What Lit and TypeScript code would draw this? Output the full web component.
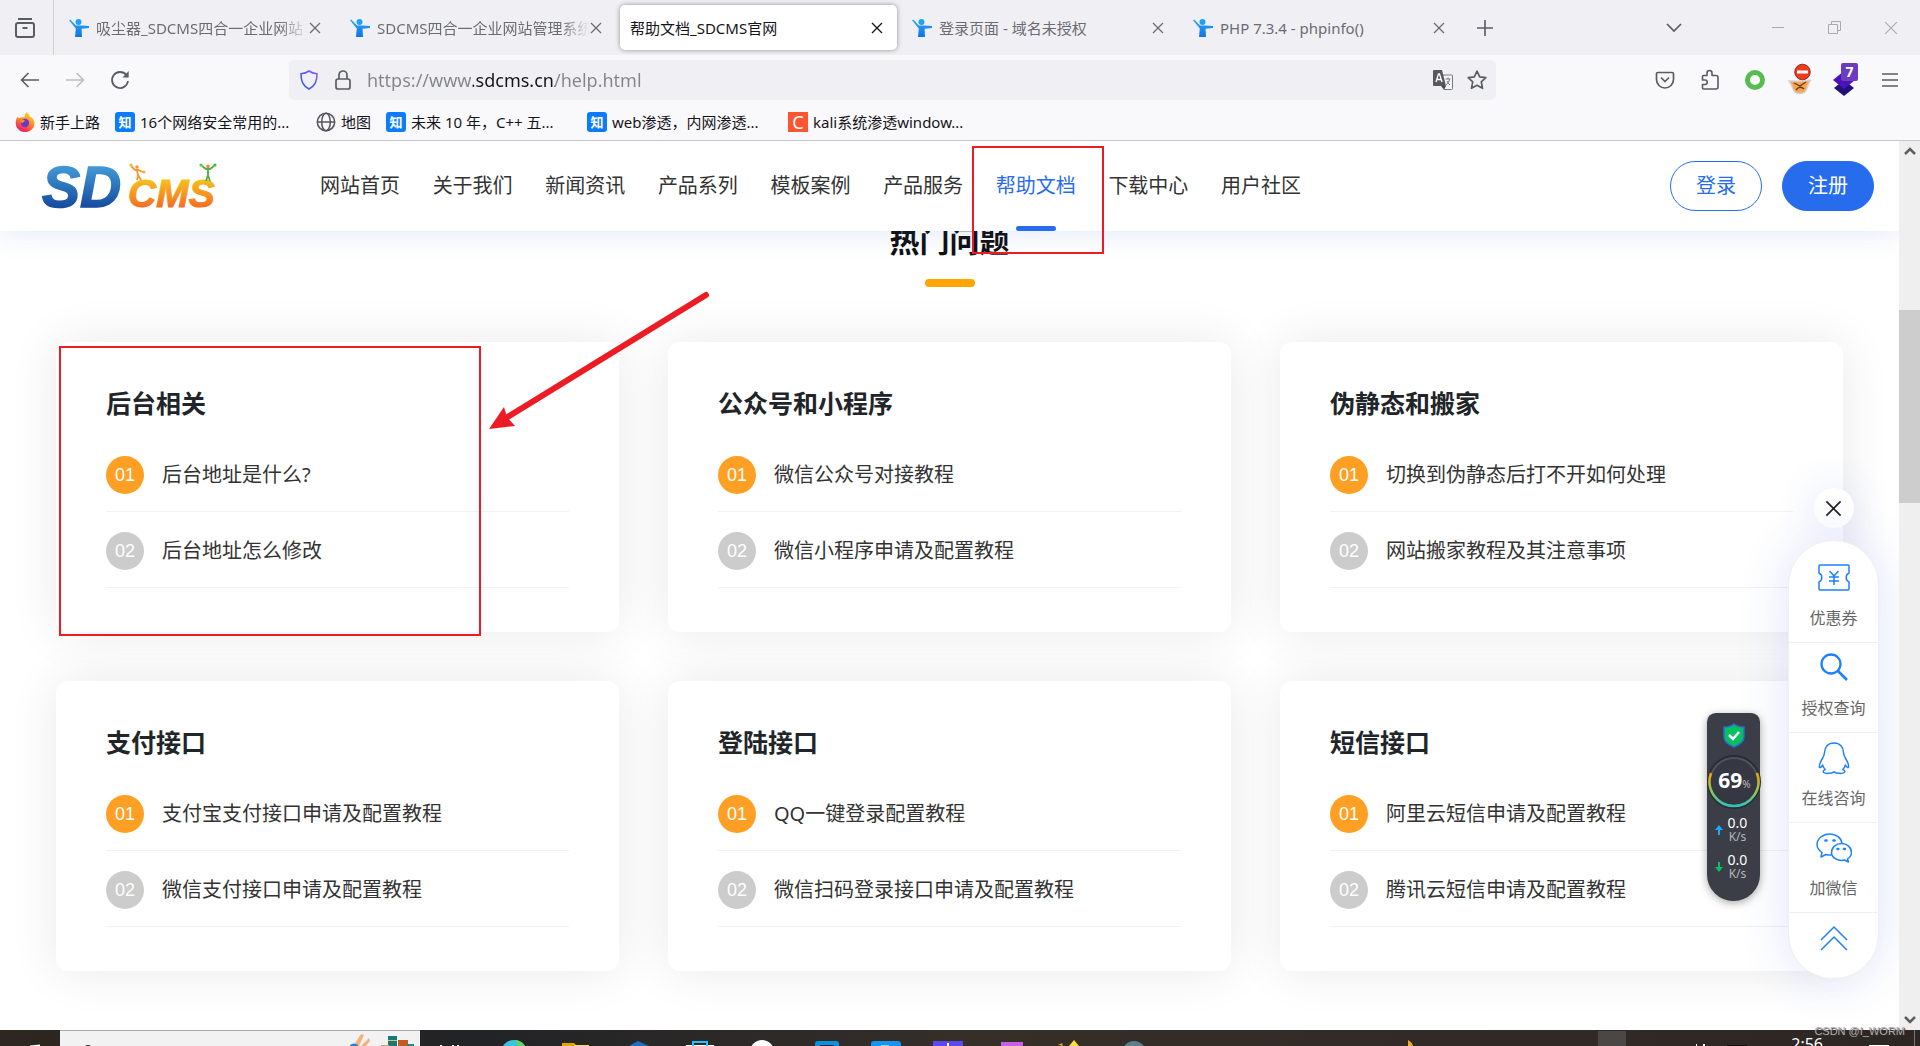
import { LitElement, html, css, svg, nothing } from "lit";
import { customElement, property } from "lit/decorators.js";
import { classMap } from "lit/directives/class-map.js";

const person = html`<svg width="20" height="18" viewBox="0 0 20 18" aria-hidden="true">
  <defs><linearGradient id="pg" x1="0" y1="0" x2="0" y2="1"><stop offset="0" stop-color="#2ba7f5"/><stop offset="1" stop-color="#1273e6"/></linearGradient></defs>
  <circle cx="9.500" cy="3" r="3" fill="#22a0f2"/>
  <path d="M0 1.200 1.200.4 7 6.400h5.400L20 7v2l-7.400.8L13 18H6l.8-8.400z" fill="url(#pg)"/>
</svg>`;

const cross = (size: number, weight = 1.3) => html`<svg width=${size} height=${size} viewBox="0 0 12 12" fill="none" stroke="currentColor" stroke-width=${weight} aria-hidden="true"><path d="M1 1 11 11M11 1 1 11"/></svg>`;

const firefox = html`<svg width="20" height="20" viewBox="0 0 20 20" aria-hidden="true">
  <defs><linearGradient id="ff" x1=".8" y1="0" x2=".3" y2="1"><stop offset="0" stop-color="#ffe03a"/><stop offset=".45" stop-color="#ff9020"/><stop offset=".8" stop-color="#fb3c4e"/><stop offset="1" stop-color="#e8127c"/></linearGradient></defs>
  <path d="M11.500 0c2 1.500 3 3 3.500 4.500 3 1.500 4.500 4 4.500 7A9.300 8.500 0 0 1 .7 11.500C.7 8.500 1.500 6 3 4.500c0 1 .4 1.600 1 2C5.500 5 8 5 9.500 5.500 9.500 3 10.300 1.200 11.500 0z" fill="url(#ff)"/>
  <circle cx="10" cy="11" r="4.200" fill="#6a38d0"/><path d="M5 8c2-1 4-.4 5.500 1-1.600.2-2 .8-2.500 2C6 11 5 9.500 5 8z" fill="#ff8a1c"/>
</svg>`;

const globe = html`<svg width="20" height="20" viewBox="0 0 20 20" fill="none" stroke="#55545f" stroke-width="1.5" aria-hidden="true"><circle cx="10" cy="10" r="8.700"/><ellipse cx="10" cy="10" rx="4.300" ry="8.700"/><path d="M1.300 10h17.400"/></svg>`;

interface Tab { title: string; active?: boolean }
interface Mark { kind: "firefox" | "globe" | "zhi" | "c"; label: string }
interface Group { title: string; items: string[] }

const TABS: Tab[] = [
  { title: "吸尘器_SDCMS四合一企业网站" },
  { title: "SDCMS四合一企业网站管理系统" },
  { title: "帮助文档_SDCMS官网", active: true },
  { title: "登录页面 - 域名未授权" },
  { title: "PHP 7.3.4 - phpinfo()" },
];

const MARKS: Mark[] = [
  { kind: "firefox", label: "新手上路" },
  { kind: "zhi", label: "16个网络安全常用的..." },
  { kind: "globe", label: "地图" },
  { kind: "zhi", label: "未来 10 年，C++ 五..." },
  { kind: "zhi", label: "web渗透，内网渗透..." },
  { kind: "c", label: "kali系统渗透window..." },
];

const GROUPS: Group[] = [
  { title: "后台相关", items: ["后台地址是什么?", "后台地址怎么修改"] },
  { title: "公众号和小程序", items: ["微信公众号对接教程", "微信小程序申请及配置教程"] },
  { title: "伪静态和搬家", items: ["切换到伪静态后打不开如何处理", "网站搬家教程及其注意事项"] },
  { title: "支付接口", items: ["支付宝支付接口申请及配置教程", "微信支付接口申请及配置教程"] },
  { title: "登陆接口", items: ["QQ一键登录配置教程", "微信扫码登录接口申请及配置教程"] },
  { title: "短信接口", items: ["阿里云短信申请及配置教程", "腾讯云短信申请及配置教程"] },
];

const NAV = ["网站首页", "关于我们", "新闻资讯", "产品系列", "模板案例", "产品服务", "帮助文档", "下载中心", "用户社区"];

const reset = css`
  *, *::before, *::after { box-sizing: border-box; }
  button { font: inherit; color: inherit; background: none; border: 0; padding: 0; margin: 0; display: flex; align-items: center; justify-content: center; }
  a { color: inherit; text-decoration: none; }
  svg { display: block; flex: none; }
  ul, h2, h3 { margin: 0; padding: 0; list-style: none; }
`;

@customElement("browser-chrome")
class BrowserChrome extends LitElement {
  static styles = [reset, css`
    :host { display: block; background: #f9f9fb; border-bottom: 1px solid #c8c8cb; color: #5b5b66; font: 15px/20px "Noto Sans", "Noto Sans CJK SC", sans-serif; }
    .tabs { display: flex; align-items: center; height: 55px; background: #f0f0f4; }
    .recent { flex: none; width: 54px; height: 55px; border-right: 1px solid #cfcfd6; padding-right: 3px; }
    .strip { display: flex; gap: 4px; margin-left: 4px; min-width: 0; }
    .tab { display: flex; align-items: center; width: 277px; height: 45px; padding: 0 14px 0 11px; border-radius: 5px; color: #6b6b73; }
    .tab.active { background: #fff; color: #15141a; box-shadow: 0 0 5px rgba(0, 0, 0, .4); padding-left: 10px; }
    .title { display: block; flex: 1; min-width: 0; margin-left: 7px; overflow: hidden; white-space: nowrap; text-align: left; line-height: 22px; }
    .title.long { -webkit-mask-image: linear-gradient(to left, transparent, #000 30px); mask-image: linear-gradient(to left, transparent, #000 30px); }
    .active .title { margin-left: 0; }
    .close { width: 12px; height: 20px; }
    .plus { margin-left: 18px; }
    .window { display: flex; align-items: center; margin-left: auto; padding-right: 22px; color: #a9a9b0; }
    .window button { width: 57px; height: 40px; }
    .window .all { width: 40px; margin-right: 55px; color: #5b5b66; }
    .window .quit { width: 14px; margin-left: 21px; }
    .nav { display: flex; align-items: center; height: 50px; padding: 0 20px 0 20px; }
    .moves { display: flex; gap: 25px; flex: none; width: 269px; }
    .moves button, .tools button { width: 20px; height: 24px; }
    .off { color: #bdbdc4; }
    .address { display: flex; align-items: center; flex: 0 1 1207px; min-width: 0; height: 40px; padding: 0 9px 0 10px; border-radius: 5px; background: #f0f0f4; gap: 14px; }
    .address input { flex: 1; min-width: 0; height: 28px; border: 0; padding: 0; outline: 0; font: 18px/28px "Noto Sans", sans-serif; color: transparent;
      background: linear-gradient(to right, #84848c 0 106px, #15141a 106px 188px, #84848c 188px); -webkit-background-clip: text; background-clip: text; }
    .tools { display: flex; gap: 25px; margin-left: auto; }
    .marks { display: flex; align-items: center; height: 35px; padding: 0 15px 1px; color: #15141a; }
    .marks a { display: flex; align-items: center; gap: 5px; margin-right: 15px; white-space: nowrap; }
    .label.cut { min-width: 161px; }
    .zhi, .c { display: flex; align-items: center; justify-content: center; width: 20px; height: 20px; border-radius: 3px; background: #0b7bff; color: #fff; font: bold 13px/20px "Noto Sans CJK SC", sans-serif; }
    .c { border-radius: 0; background: #fc5531; font: 18px/20px "Noto Sans", sans-serif; }
  `];

  private mark(m: Mark) {
    const icon = m.kind === "firefox" ? firefox : m.kind === "globe" ? globe
      : html`<span class=${m.kind}>${m.kind === "zhi" ? "知" : "C"}</span>`;
    return html`<a href="#">${icon}<span class=${classMap({ label: true, cut: m.label.endsWith("...") })}>${m.label}</span></a>`;
  }

  render() {
    return html`
      <div class="tabs">
        <button class="recent" aria-label="Recent"><svg width="22" height="22" viewBox="0 0 22 22" fill="none" stroke="currentColor" stroke-width="2"><path d="M4 2h14"/><rect x="2" y="6" width="18" height="14" rx="2"/><path d="M8.500 11h5"/></svg></button>
        <div class="strip">
          ${TABS.map((t, i) => html`<div class=${classMap({ tab: true, active: !!t.active })}>
            ${t.active ? nothing : person}
            <button class=${classMap({ title: true, long: i < 2 })}>${t.title}</button>
            <button class="close" aria-label="Close tab">${cross(12)}</button>
          </div>`)}
        </div>
        <button class="plus" aria-label="New tab"><svg width="16" height="16" viewBox="0 0 16 16" stroke="currentColor" stroke-width="1.600"><path d="M8 0v16M0 8h16"/></svg></button>
        <div class="window">
          <button class="all" aria-label="List tabs"><svg width="16" height="10" viewBox="0 0 16 10" fill="none" stroke="currentColor" stroke-width="1.700"><path d="M1 1l7 7 7-7"/></svg></button>
          <button aria-label="Minimize"><svg width="12" height="2" viewBox="0 0 12 2"><path d="M0 0h12v1H0z" fill="currentColor"/></svg></button>
          <button aria-label="Restore"><svg width="13" height="13" viewBox="0 0 13 13" fill="none" stroke="currentColor"><path d="M.5 3.500h9v9h-9zM3.500 3.500v-3h9v9h-3"/></svg></button>
          <button class="quit" aria-label="Close">${cross(14, 1)}</button>
        </div>
      </div>
      <div class="nav">
        <div class="moves">
          <button aria-label="Back"><svg width="20" height="16" viewBox="0 0 20 16" fill="none" stroke="currentColor" stroke-width="1.600"><path d="M19 8H2M8.500 1l-7 7 7 7"/></svg></button>
          <button class="off" aria-label="Forward"><svg width="20" height="16" viewBox="0 0 20 16" fill="none" stroke="currentColor" stroke-width="1.600"><path d="M1 8h17M11.500 1l7 7-7 7"/></svg></button>
          <button aria-label="Reload"><svg width="20" height="20" viewBox="0 0 20 20" fill="none" stroke="currentColor" stroke-width="1.800"><path d="M16.300 5A8 8 0 1 0 18 11"/><path d="M12.500 7.500h6.200V1z" fill="currentColor" stroke="none"/></svg></button>
        </div>
        <div class="address">
          <svg width="20" height="20" viewBox="0 0 20 20" fill="none" stroke-width="1.600"><defs><linearGradient id="sh" x1="0" y1="1" x2="1" y2="0"><stop offset="0" stop-color="#2b5bdc"/><stop offset="1" stop-color="#9059ff"/></linearGradient></defs><path d="M10 1c2.500 1.800 5 2.500 8 2.800 0 8-2 12-8 15.200C4 15.800 2 11.800 2 3.800 5 3.500 7.500 2.800 10 1z" stroke="url(#sh)"/></svg>
          <svg width="20" height="20" viewBox="0 0 20 20" fill="none" stroke="currentColor" stroke-width="1.700"><rect x="3" y="9" width="14" height="10" rx="2"/><path d="M6 9V5a4 4 0 0 1 8 0v4"/></svg>
          <input aria-label="Address" value="https://www.sdcms.cn/help.html">
          <button aria-label="Translate"><svg width="20" height="20" viewBox="0 0 20 20"><path d="M8 5h10.500a1 1 0 0 1 1 1v12.500a1 1 0 0 1-1 1H11z" fill="#f5f5f7" stroke="#77777f"/><path d="M1 0h8l4 16H1a1 1 0 0 1-1-1V1a1 1 0 0 1 1-1z" fill="#58585f"/><path d="M3 12 5.500 4h1L9 12M4 9.500h4" fill="none" stroke="#fff" stroke-width="1.300"/><path d="M12.500 9h5M15 7.500V9M16.500 9c-.5 3-1.500 4.500-3.500 6M14 11c.6 1.700 1.600 3 3 4" fill="none" stroke="#77777f"/><path d="m8 16 3 3.500 2-3.500z" fill="#44444b"/></svg></button>
          <button aria-label="Bookmark"><svg width="20" height="20" viewBox="0 0 20 20" fill="none" stroke="currentColor" stroke-width="1.700" stroke-linejoin="round"><path d="m10 1.200 2.700 5.600 6.100.8-4.500 4.200 1.200 6.500L10 15.300l-5.500 3 1.200-6.500L1.200 7.600l6.100-.8z"/></svg></button>
        </div>
        <div class="tools">
          <button aria-label="Pocket"><svg width="20" height="18" viewBox="0 0 20 18" fill="none" stroke="currentColor" stroke-width="1.700"><path d="M3 1.500h14a1.500 1.500 0 0 1 1.500 1.500v5.500a8.500 8.500 0 0 1-17 0V3A1.500 1.500 0 0 1 3 1.500z"/><path d="m6 6.500 4 4 4-4"/></svg></button>
          <button aria-label="Extensions"><svg width="20" height="22" viewBox="0 0 20 22" fill="none" stroke="currentColor" stroke-width="1.600" stroke-linejoin="round"><path d="M7 6.500V4a2.500 2.500 0 0 1 5 0v2.500h4a2 2 0 0 1 2 2V18a2 2 0 0 1-2 2H3.500a1 1 0 0 1-1-1v-3.500H5a2 2 0 0 0 0-4.500H2.500V7.500a1 1 0 0 1 1-1z"/></svg></button>
          <button aria-label="Proxy"><svg width="20" height="20" viewBox="0 0 20 20"><circle cx="10" cy="10" r="7.500" fill="#fff" stroke="#56bd4f" stroke-width="5"/></svg></button>
          <button aria-label="Cookies"><svg width="24" height="34" viewBox="0 0 24 34"><path d="M1 18c3 0 13 1 22-1-3 2-3 8-6 12-3 2-8 2-10 0-3-3-3-8-6-11z" fill="#f7a552" stroke="#d6d0c8" stroke-width="1.500"/><path d="m6 20 6 3 6-4M8 27c3-4 6-3 8-1" fill="none" stroke="#6f3a12" stroke-width="1.300"/><circle cx="14.500" cy="9" r="7.800" fill="#ee3a1e" stroke="#7c1a10" stroke-width=".8"/><path d="M9 7.500h11v3H9z" fill="#fff"/></svg></button>
          <button aria-label="Cube"><svg width="26" height="34" viewBox="0 0 26 34"><path d="m12 17 10 8-10 8-10-8z" fill="#23107a"/><path d="m12 8 11 9-11 9L1 17z" fill="#4a12b8"/><rect x="9" y="0" width="17" height="18" rx="2" fill="#6c3cc0"/><text x="17.500" y="14" text-anchor="middle" font-size="14" font-weight="700" fill="#fff" font-family="Noto Sans">7</text></svg></button>
          <button aria-label="Menu"><svg width="16" height="16" viewBox="0 0 16 16" stroke="currentColor" stroke-width="1.700"><path d="M0 2h16M0 8h16M0 14h16"/></svg></button>
        </div>
      </div>
      <div class="marks">${MARKS.map((m) => this.mark(m))}</div>`;
  }
}

@customElement("site-header")
class SiteHeader extends LitElement {
  static styles = [reset, css`
    :host { display: flex; align-items: center; height: 90px; padding: 0 25px 0 40px; background: #fff; box-shadow: 0 0 30px rgba(40, 90, 190, .16); font: 20px/30px "Noto Sans", "Noto Sans CJK SC", sans-serif; color: #333; }
    .logo { flex: none; width: 280px; }
    nav { display: flex; justify-content: space-between; flex: 0 1 981px; height: 90px; }
    nav a { display: flex; flex-direction: column; align-items: center; justify-content: space-between; padding-top: 30px; white-space: nowrap; }
    .current { color: #286cee; }
    .current::after { content: ""; width: 40px; height: 5px; border-radius: 3px; background: #286cee; }
    .account { display: flex; gap: 20px; margin-left: auto; }
    .account button { width: 92px; height: 50px; border: 1px solid #286cee; border-radius: 25px; color: #286cee; }
    .account .join { background: #286cee; color: #fff; }
  `];

  render() {
    return html`
      <a class="logo" href="#" aria-label="SDCMS"><svg width="180" height="80" viewBox="0 -12 180 80">
        <defs>
          <linearGradient id="b" gradientUnits="userSpaceOnUse" x1="0" y1="6" x2="0" y2="50"><stop offset="0" stop-color="#459edb"/><stop offset="1" stop-color="#144a9d"/></linearGradient>
          <linearGradient id="o" gradientUnits="userSpaceOnUse" x1="0" y1="19" x2="0" y2="50"><stop offset="0" stop-color="#f6c81c"/><stop offset="1" stop-color="#f36c21"/></linearGradient>
        </defs>
        <g font-family="Liberation Sans" font-weight="700" font-style="italic">
          <text x="2" y="49" font-size="57" fill="url(#b)" stroke="url(#b)" stroke-width="1.500">SD</text>
          <text x="88" y="49" font-size="39" fill="url(#o)" stroke="url(#o)" stroke-width="1">CMS</text>
        </g>
        <g fill="none" stroke-width="1.800"><path d="m91 8 4 4h3l5 2M97 12l1 6-1 4M98 17l3 5" stroke="#f59a2a"/><path d="m162 8 4 3h4l4-3M168 11v6l-2 6M168 17l2 6" stroke="#4cae43"/></g>
        <circle cx="97" cy="9" r="1.800" fill="#f59a2a"/><circle cx="91" cy="7" r="1.600" fill="#f6b63c"/><circle cx="104" cy="14" r="1.600" fill="#f6b63c"/>
        <circle cx="168" cy="8.500" r="1.800" fill="#f0862a"/><circle cx="161" cy="7" r="1.600" fill="#6cc04a"/><circle cx="175" cy="7" r="1.600" fill="#4cae43"/>
      </svg></a>
      <nav>${NAV.map((n) => html`<a href="#" class=${n === "帮助文档" ? "current" : ""}>${n}</a>`)}</nav>
      <div class="account"><button>登录</button><button class="join">注册</button></div>`;
  }
}

@customElement("topic-card")
class TopicCard extends LitElement {
  @property({ attribute: false }) group!: Group;
  static styles = [reset, css`
    :host { display: block; padding: 42px 50px 44px; border-radius: 12px; background: #fff; box-shadow: 0 0 50px rgba(0, 0, 0, .09); color: #333; font: 20px/30px "Noto Sans", "Noto Sans CJK SC", sans-serif; }
    h3 { margin-bottom: 14px; font-size: 25px; line-height: 38px; color: #212529; }
    li { height: 76px; padding-top: 2px; border-bottom: 1px solid #f2f2f2; display: flex; align-items: center; }
    a { display: flex; align-items: center; gap: 18px; white-space: nowrap; }
    .num { display: flex; align-items: center; justify-content: center; width: 38px; height: 38px; border-radius: 50%; background: #ccc; color: #fff; font: 18px/38px "Liberation Sans", sans-serif; }
    li:first-child .num { background: #ff9f24; }
  `];

  render() {
    return html`<h3>${this.group.title}</h3>
      <ul>${this.group.items.map((t, i) => html`<li><a href="#"><span class="num">0${i + 1}</span>${t}</a></li>`)}</ul>`;
  }
}

@customElement("service-dock")
class ServiceDock extends LitElement {
  static styles = [reset, css`
    :host { display: flex; flex-direction: column; align-items: center; gap: 12px; font: 16px/24px "Noto Sans", "Noto Sans CJK SC", sans-serif; color: #666; }
    .hide { width: 40px; height: 40px; border-radius: 50%; background: #fff; box-shadow: 0 0 40px rgba(60, 90, 230, .16); }
    .dock { width: 91px; border: 1px solid #f0f0f2; border-radius: 45px; background: #fff; box-shadow: 0 0 50px rgba(60, 90, 230, .16); overflow: hidden; }
    .dock button { flex-direction: column; justify-content: space-between; width: 100%; height: 90px; padding: 8px 0 12px; border-bottom: 1px solid #f0f0f0; white-space: nowrap; }
    .dock button:first-child { height: 102px; padding-top: 20px; }
    .dock button:last-child { height: 65px; border: 0; padding: 9px 0 0; justify-content: flex-start; }
    svg { color: #1e80ff; }
    .hide svg { color: #222; }
  `];

  render() {
    const box = (body: unknown) => html`<svg width="36" height="34" viewBox="0 0 36 34" fill="none" stroke="currentColor" stroke-width="1.500" stroke-linejoin="round">${body}</svg>`;
    return html`
      <button class="hide" aria-label="Hide">${cross(17, 1.2)}</button>
      <div class="dock">
        <button>${box(svg`<path d="M4 4h28q1 0 1 1v7a5 5 0 0 0 0 9v7q0 1-1 1H4q-1 0-1-1v-7a5 5 0 0 0 0-9V5q0-1 1-1z"/><path d="m13.500 10 4.500 5 4.500-5M18 15v9M13 16h10M13 20h10"/>`)}优惠券</button>
        <button>${box(svg`<circle cx="15" cy="13" r="9.500" stroke-width="2.300"/><path d="m22 20 9 9" stroke-width="2.600"/>`)}授权查询</button>
        <button>${box(svg`<path d="M18 2c6 0 9.500 4 9.500 9.500 0 2 .5 3 1.800 5.500 2.700 4.500 4 8 3 9.500-1 .6-2-1-3-2.500 0 2-1 3-2.500 4.500 2 1 2.500 2 1.500 3-2 1.500-8 1-10.300-.7C15.700 32.500 9.700 33 7.700 31.500c-1-1-.5-2 1.500-3C7.700 27 6.700 26 6.700 24c-1 1.500-2 3-3 2.500-1-1.500.3-5 3-9.500C8 14.500 8.500 13.500 8.500 11.500 8.500 6 12 2 18 2z"/>`)}在线咨询</button>
        <button>${box(svg`<path d="M14 3C7 3 1 7.500 1 13.500c0 3.500 2 6 5 8L5 26l5-2.500c2 .5 3.500.6 5.500.5"/><path d="M14 3c6 0 11.500 4 12 9.500"/><path d="M25.500 12.500c5.500 0 10 4 10 9 0 3-1.500 5-4 6.500l1 3-4-2c-6 1.500-13-2-13-7.500 0-5 4.500-9 10-9z"/><path d="M9.500 9.500h1M17.500 9.500h1M21.500 18h.8M28 18h.8" stroke-width="2.600" stroke-linecap="round"/>`)}加微信</button>
        <button aria-label="Top">${box(svg`<path d="M5 18 18 5l13 13M5 28l13-13 13 13"/>`)}</button>
      </div>`;
  }
}

@customElement("speed-meter")
class SpeedMeter extends LitElement {
  static styles = [reset, css`
    :host { display: flex; flex-direction: column; align-items: center; width: 53px; height: 188px; padding-top: 10px; border-radius: 9px 9px 27px 27px; background: #3b3d47; box-shadow: 0 2px 8px rgba(0, 0, 0, .35); color: #fff; font: 14px/16px "Noto Sans", sans-serif; }
    .ring { display: grid; place-items: center; margin-top: 6px; }
    .ring > * { grid-area: 1 / 1; }
    .load { font-size: 21px; font-weight: 700; line-height: 24px; padding-left: 2px; }
    .load small { font-size: 10px; font-weight: 400; color: #bbb; }
    .rate { display: flex; align-items: center; gap: 5px; height: 37px; padding: 2px 5px 0 0; text-align: center; line-height: 14px; }
    .rate small { display: block; font-size: 12px; line-height: 13px; color: #b4b5ba; }
  `];

  render() {
    const rate = (up: boolean) => html`<div class="rate">
      <svg width="8" height="10" viewBox="0 0 8 10"><path d=${up ? "M4 0l4 5H5v5H3V5H0z" : "M4 10l4-5H5V0H3v5H0z"} fill=${up ? "#19a9ff" : "#0ac067"}/></svg>
      <span>0.0<small>K/s</small></span></div>`;
    return html`
      <svg width="22" height="25" viewBox="0 0 22 25"><path d="M11 1c3 2.500 6 3 10 3v10c0 5-5 8-10 10C6 22 1 19 1 14V4c4 0 7-.5 10-3z" fill="#05c160" stroke="#2f66d8" stroke-width="1.500"/><path d="m6 12 4 4 6-7" fill="none" stroke="#fff" stroke-width="2.500"/></svg>
      <div class="ring">
        <svg width="56" height="56" viewBox="0 0 56 56" fill="none"><defs><linearGradient id="r" x1="0" y1="0" x2="0" y2="1"><stop offset="0" stop-color="#f5a500"/><stop offset=".6" stop-color="#86c95a"/><stop offset="1" stop-color="#2cc3b4"/></linearGradient></defs>
          <circle cx="28" cy="28" r="27" fill="#292b35"/><circle cx="28" cy="28" r="24" fill="#353742" stroke="#50525d" stroke-width="2"/><path d="M5 19a24.500 24.500 0 1 0 46 0" stroke="url(#r)" stroke-width="2.500"/></svg>
        <span class="load">69<small>%</small></span>
      </div>
      ${rate(true)}${rate(false)}`;
  }
}

@customElement("task-bar")
class TaskBar extends LitElement {
  static styles = [reset, css`
    :host { display: flex; height: 16px; overflow: hidden; background: linear-gradient(to right, #2e261f 0, #222326 25%, #352e29 50%, #2d2623 100%); color: #fff; }
    .start { flex: none; width: 60px; }
    .find { flex: none; display: flex; justify-content: flex-end; width: 360px; background: #f2f2f2; border-top: 1px solid #a8a8a8; }
    .apps { display: flex; }
    .tray { display: flex; margin-left: auto; border-right: 1px solid #777; margin-right: 5px; padding-right: 25px; font: 16px/16px "Noto Sans", sans-serif; }
    .time { padding: 6px 46px 0 0; }
  `];

  render() {
    const icons = [
      svg`<circle cx="31" cy="23" r="13" fill="#35c1e8"/><path d="M32 10a13 13 0 0 1 11 8l-8-2z" fill="#5ad85c"/>`,
      svg`<path d="M17 13h12l3 3H17z" fill="#e6a200"/><path d="M29 15h15v1H29z" fill="#ffd667"/>`,
      svg`<path d="m22 16 9-5 11 5z" fill="#1b6fc4"/>`,
      svg`<path d="M17 15h28v1H17z" fill="#fff"/><path d="M24 16v-4h14v4" fill="none" stroke="#20c4ff" stroke-width="2"/>`,
      svg`<circle cx="31" cy="22" r="12" fill="#fff"/>`,
      svg`<rect x="22" y="11" width="24" height="20" rx="3" fill="#0a93dc"/><path d="M27 15h14v1H27z" fill="#123"/>`,
      svg`<rect x="16" y="11" width="30" height="20" rx="3" fill="#1694f0"/><path d="M26 15h8v1h-8z" fill="#9ad4ff"/>`,
      svg`<path d="M16 11h30v10H16z" fill="#5a48f0"/><path d="M30 13h2v3h-2z" fill="#fff"/>`,
      svg`<path d="M22 12h22v10H22z" fill="#c65fe8"/>`,
      svg`<path d="m28 16 5-6 5 6z" fill="#ffe13a"/><path d="m17 15 4-2 1 3z" fill="#d9a520"/>`,
      svg`<circle cx="31" cy="23" r="12" fill="#5d7e8c"/>`,
    ];
    return html`
      <svg class="start" width="60" height="16" viewBox="0 0 60 16"><path d="m30 15.500 10-1v1.500H30z" fill="#fff"/></svg>
      <div class="find"><svg width="360" height="15" viewBox="0 0 360 15"><path d="M25 15q3-2 6 0z" fill="#222"/>
        <path d="m294 14 7-11 3 1-5 11zM301 15l8-8 1 3-4 5z" fill="#f2b27a"/><path d="M290 14q4-3 8 0v1h-8z" fill="#2b7fd0"/><path d="M328 5h9v10h-9z" fill="#177a78"/><path d="M328 9h9v1h-9z" fill="#e0c070"/><path d="M338 9h10v6h-10z" fill="#c65a26"/><path d="M321 15h8v-1h-8z" fill="#d6a06a"/><path d="M347 13h7v2h-7z" fill="#1c8a82"/></svg></div>
      <svg width="63" height="16" viewBox="0 0 63 16"><path d="M20 15h2v1h-2zM32 15h2v1h-2zM37 15h2v1h-2z" fill="#fff"/></svg>
      <div class="apps">${icons.map((i) => html`<svg width="62" height="16" viewBox="0 0 62 16">${i}</svg>`)}</div>
      <div class="tray">
        <svg width="392" height="16" viewBox="0 0 392 16"><path d="M9 10q4 2 5 6H9z" fill="#f2ab27"/><path d="M199 1h28v15h-28z" fill="#4b4745"/><path d="M297 14h1v2h-1zM304 14h2v2h-2z" fill="#fff"/><path d="M328 15h20v1h-20z" fill="#151312"/></svg>
        <span class="time">2:56</span><svg width="20" height="16" viewBox="0 0 20 16"><path d="M0 15h20v1H0z" fill="#fff"/></svg></div>`;
  }
}

@customElement("app-root")
class AppRoot extends LitElement {
  static styles = [reset, css`
    :host { display: flex; flex-direction: column; position: relative; height: 100vh; overflow: hidden; background: #fff; }
    .view { display: flex; flex: 1; min-height: 0; }
    .page { position: relative; flex: 1; min-width: 0; overflow: hidden; }
    site-header { position: absolute; top: 0; left: 0; right: 0; z-index: 2; }
    main { padding: 78px 56px 60px; }
    h2 { display: flex; flex-direction: column; align-items: center; gap: 20px; margin-bottom: 55px; font: bold 30px/40px "Noto Sans CJK SC", sans-serif; color: #111; }
    h2::after { content: ""; width: 50px; height: 8px; border-radius: 4px; background: #ffa500; }
    .cards { display: grid; grid-template-columns: repeat(3, minmax(0, 1fr)); gap: 49px; }
    service-dock { position: absolute; right: 20px; bottom: 51px; z-index: 3; }
    speed-meter { position: absolute; right: 139px; bottom: 129px; z-index: 3; }
    .bar { display: flex; flex-direction: column; align-items: center; flex: none; width: 21px; padding: 6px 0 6px; background: #efefef; color: #5e5e5e; }
    .thumb { width: 21px; height: 193px; margin: 155px 0 auto; background: #cdcdcd; }
    .notes { position: absolute; left: 0; top: 0; z-index: 5; pointer-events: none; }
    .credit { position: absolute; right: 15px; bottom: 8px; z-index: 6; font: 11px/14px "Liberation Sans", sans-serif; color: #b0b0b0; text-shadow: 1px 1px 1px #333; }
  `];

  render() {
    return html`
      <browser-chrome></browser-chrome>
      <div class="view">
        <div class="page">
          <site-header></site-header>
          <main>
            <h2>热门问题</h2>
            <div class="cards">${GROUPS.map((g) => html`<topic-card .group=${g}></topic-card>`)}</div>
          </main>
          <service-dock></service-dock>
          <speed-meter></speed-meter>
        </div>
        <div class="bar">
          <svg width="12" height="8" viewBox="0 0 12 8" fill="none" stroke="currentColor" stroke-width="2.500"><path d="m1 7 5-5 5 5"/></svg>
          <div class="thumb"></div>
          <svg width="12" height="8" viewBox="0 0 12 8" fill="none" stroke="currentColor" stroke-width="2.500"><path d="m1 1 5 5 5-5"/></svg>
        </div>
      </div>
      <task-bar></task-bar>
      <svg class="notes" width="1120" height="640" viewBox="0 0 1120 640" fill="none" stroke="#ed1c24" stroke-width="2">
        <path d="M973 147h130v106H973zM60 347h420v288H60z"/>
        <path d="M706 295 506 418" stroke-width="6" stroke-linecap="round"/>
        <path d="m489 429 15-22 3 10 8 9z" fill="#ed1c24" stroke="none"/>
      </svg>
      <span class="credit">CSDN @I_WORM</span>`;
  }
}
